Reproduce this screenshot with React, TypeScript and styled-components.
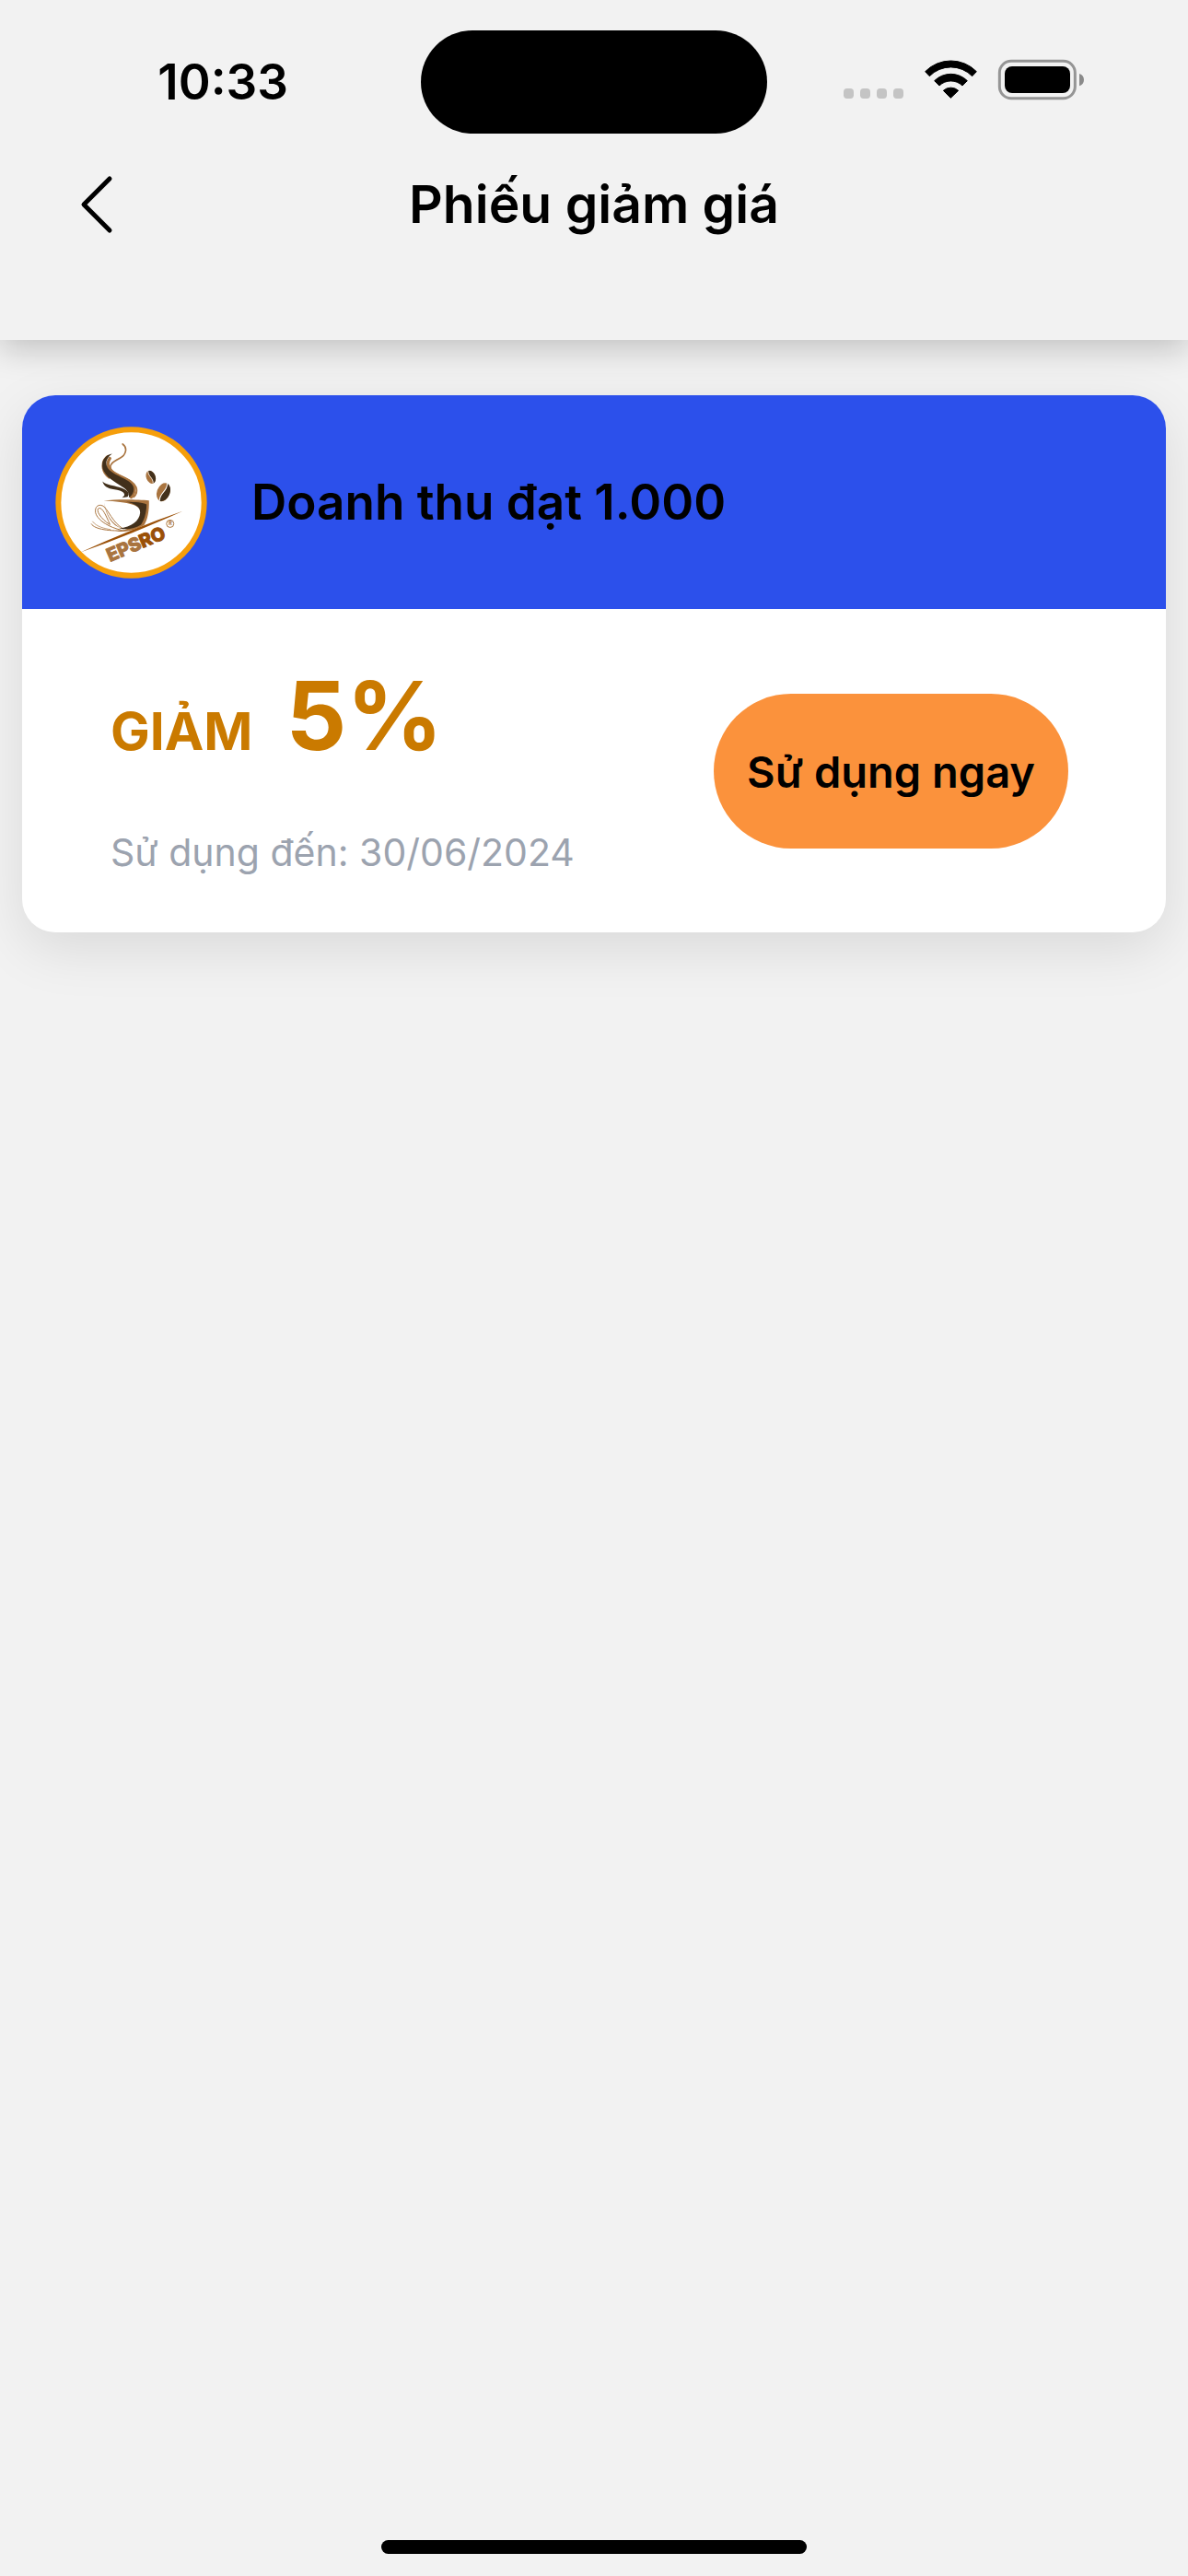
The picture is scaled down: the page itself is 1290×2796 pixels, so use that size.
import React from "react";
import styled, { createGlobalStyle } from "styled-components";

const Global = createGlobalStyle`
  * { box-sizing: border-box; }
  body { margin: 0; background: #f2f2f2; color: #000; font-family: Inter, "Noto Sans", sans-serif; }
  h1, h2, p { margin: 0; }
  button { border: 0; padding: 0; font: inherit; color: inherit; cursor: pointer; }
`;

const Screen = styled.div`
  min-height: 100vh;
  display: flex;
  flex-direction: column;
`;

const Header = styled.header`
  background: #f2f2f2;
  box-shadow: 0 10px 33px rgba(0, 0, 0, 0.2);
  padding-bottom: 111px;
`;

const StatusBar = styled.div`
  display: grid;
  grid-template-columns: 1fr 376px 1fr;
  align-items: center;
  padding-top: 33px;
`;

const Time = styled.time`
  justify-self: end;
  margin-right: 144px;
  font-size: 53px;
  line-height: 64px;
  font-weight: 600;
`;

const Island = styled.div`
  height: 112px;
  border-radius: 56px;
  background: #000;
`;

const StatusSvg = styled.svg`
  width: 290px;
  height: 78px;
  margin-left: 67px;
`;

const NavBar = styled.nav`
  display: grid;
  grid-template-columns: 1fr auto 1fr;
  align-items: center;
  padding: 41px 72px 0;
`;

const BackButton = styled.button`
  justify-self: start;
  width: 72px;
  height: 72px;
  background: none;

  svg { display: block; width: 72px; height: 72px; }
`;

const Title = styled.h1`
  font-size: 57px;
  line-height: 72px;
  font-weight: 600;
`;

const List = styled.main`
  flex: 1;
  padding: 60px 24px;
`;

const Card = styled.article`
  border-radius: 36px;
  overflow: hidden;
  background: #fff;
  box-shadow: 0 18px 60px rgba(0, 0, 0, 0.1);
`;

const CardHead = styled.div`
  display: flex;
  align-items: center;
  gap: 48px;
  height: 232px;
  padding: 0 36px;
  background: #2c50eb;
`;

const LogoSvg = styled.svg`
  width: 165px;
  height: 165px;
`;

const CardTitle = styled.h2`
  font-size: 53px;
  line-height: 64px;
  font-weight: 600;
`;

const CardBody = styled.div`
  display: flex;
  align-items: center;
  justify-content: space-between;
  padding: 56px 106px 55px 96px;
`;

const Discount = styled.p`
  display: flex;
  align-items: baseline;
  gap: 36px;
  color: #ca7a00;
  font-weight: 700;
`;

const DiscountLabel = styled.span`
  font-size: 57px;
`;

const DiscountValue = styled.span`
  font-size: 103px;
  line-height: 120px;
`;

const Expiry = styled.p`
  margin-top: 56px;
  font-size: 41px;
  line-height: 64px;
  color: #9ca3af;
`;

const UseButton = styled.button`
  height: 168px;
  padding: 0 36px;
  border-radius: 84px;
  background: #fb923c;
  font-size: 47px;
  font-weight: 600;
`;

const HomeBar = styled.div`
  align-self: center;
  width: 462px;
  height: 15px;
  margin-bottom: 24px;
  border-radius: 8px;
  background: #000;
`;

function StatusIcons() {
  return (
    <StatusSvg viewBox="0 0 870 234" aria-hidden="true">
      {[48, 102, 156, 210].map((x) => (
        <rect key={x} x={x} y="138" width="33" height="33" rx="11" fill="#c4c4c4" />
      ))}
      <g stroke="#000" strokeWidth="3" strokeLinejoin="round">
        <path d="M314 83A117 117 0 0 1 481 83L467 98A97 97 0 0 0 328 98Z" />
        <path d="M344 113A76 76 0 0 1 451 113L435 129A54 54 0 0 0 360 129Z" />
        <path d="M373 145A36 36 0 0 1 422 145L397 169Z" />
      </g>
      <rect x="556" y="49" width="246" height="121" rx="38" fill="none" stroke="#959595" strokeWidth="9" />
      <rect x="573" y="66" width="213" height="87" rx="24" />
      <path d="M816 90C836 95 836 125 816 130Z" fill="#8a8a8a" />
    </StatusSvg>
  );
}

function Logo() {
  return (
    <LogoSvg viewBox="30 38 496 496" role="img" aria-label="EPSRO">
      <circle cx="278" cy="286" r="238" fill="#fff" stroke="#f59e0b" strokeWidth="18" />
      <g fill="none" stroke="#a9743f" strokeLinecap="round">
        <path d="M250 95C266 106 263 130 240 142C212 156 204 166 214 180C232 202 282 208 294 236C299 250 294 260 286 268" strokeWidth="5" />
        <path d="M208 142C194 162 206 182 226 193C256 207 284 216 288 240C289 254 284 262 278 268" strokeWidth="10" />
        <path d="M200 134C178 150 178 186 206 206" strokeWidth="5" />
        <path d="M252 372C216 350 204 310 186 297C166 287 155 308 164 326C174 346 204 366 246 376" strokeWidth="3" />
        <path d="M208 356C194 326 186 304 173 304C162 308 172 334 208 358" strokeWidth="3" />
        <path d="M148 356C158 374 210 380 262 377" strokeWidth="3" />
        <path d="M152 348C166 366 190 370 210 374" strokeWidth="2" />
      </g>
      <path d="M216 127C196 130 181 146 184 170C188 200 225 218 248 234C268 247 272 256 270 270C284 262 290 246 284 232C274 208 218 198 202 174C190 156 200 138 216 127Z" fill="#42301b" />
      <path d="M184 217C198 230 220 230 238 236C266 244 276 256 266 267L248 270C262 263 258 250 232 245C208 241 190 238 184 217Z" fill="#42301b" />
      <path d="M188 280C230 274 300 276 336 279C337 312 332 340 320 360C290 376 260 384 228 380C282 374 306 352 310 322C312 294 270 284 188 280Z" fill="#a9743f" />
      <path d="M262 284C290 284 318 286 328 292C328 320 320 344 310 358C292 370 262 376 238 370C280 366 304 346 307 320C308 302 292 290 262 284Z" fill="#42301b" />
      <path d="M190 286C196 324 214 354 246 370C216 362 194 328 190 286Z" fill="#a9743f" />
      <g transform="rotate(-22 342 203)">
        <ellipse cx="342" cy="203" rx="15" ry="22" fill="#a9743f" />
        <path d="M342 181C362 184 362 222 342 225C350 210 336 198 342 181Z" fill="#42301b" />
        <path d="M341 181C334 198 349 208 341 225" fill="none" stroke="#fff" strokeWidth="2" />
      </g>
      <g transform="rotate(20 383 252)">
        <ellipse cx="383" cy="252" rx="21" ry="31" fill="#a9743f" />
        <path d="M385 221C412 226 410 280 381 283C372 262 396 246 385 221Z" fill="#42301b" />
        <path d="M385 221C395 246 371 258 381 283" fill="none" stroke="#fff" strokeWidth="3" />
      </g>
      <path d="M112 448C220 400 330 354 446 314C340 362 230 408 112 448Z" fill="#9a5007" />
      <g transform="translate(209 480) rotate(-23)" fontSize="60" fontWeight="800" strokeWidth="3" strokeLinejoin="round">
        <text>
          <tspan fill="#a9743f" stroke="#a9743f">EPS</tspan>
          <tspan fill="#9a5007" stroke="#9a5007">RO</tspan>
        </text>
      </g>
      <circle cx="405" cy="355" r="12" fill="none" stroke="#a9743f" strokeWidth="3" />
      <text x="405" y="361" fontSize="17" fontWeight="700" textAnchor="middle" fill="#a9743f">R</text>
    </LogoSvg>
  );
}

export default function App() {
  return (
    <Screen>
      <Global />
      <Header>
        <StatusBar>
          <Time>10:33</Time>
          <Island />
          <StatusIcons />
        </StatusBar>
        <NavBar>
          <BackButton aria-label="Quay lại">
            <svg viewBox="0 0 72 72" aria-hidden="true">
              <path d="M47 8L19 36L47 64" fill="none" stroke="#000" strokeWidth="5" strokeLinecap="round" strokeLinejoin="round" />
            </svg>
          </BackButton>
          <Title>Phiếu giảm giá</Title>
        </NavBar>
      </Header>
      <List>
        <Card>
          <CardHead>
            <Logo />
            <CardTitle>Doanh thu đạt 1.000</CardTitle>
          </CardHead>
          <CardBody>
            <div>
              <Discount>
                <DiscountLabel>GIẢM</DiscountLabel>
                <DiscountValue>5%</DiscountValue>
              </Discount>
              <Expiry>Sử dụng đến: 30/06/2024</Expiry>
            </div>
            <UseButton>Sử dụng ngay</UseButton>
          </CardBody>
        </Card>
      </List>
      <HomeBar />
    </Screen>
  );
}
